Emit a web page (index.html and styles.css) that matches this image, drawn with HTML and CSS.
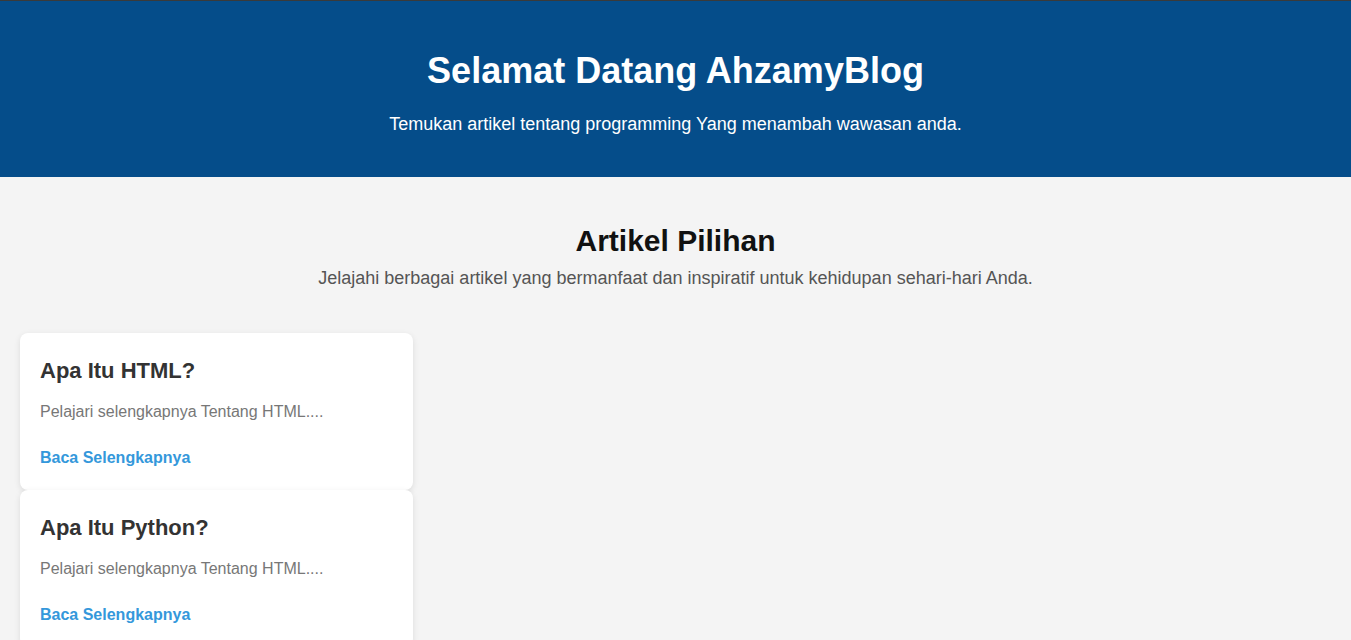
FILE: index.html
```html
<!DOCTYPE html>
<html lang="id">
<head>
    <meta charset="UTF-8">
    <meta name="viewport" content="width=device-width, initial-scale=1.0">
    <title>AhzamyBlog</title>
    <link rel="stylesheet" href="styles.css">
</head>
<body>
    <!-- Header -->
    <header class="hero">
        <h1>Selamat Datang AhzamyBlog</h1>
        <p>Temukan artikel tentang programming Yang menambah wawasan anda.</p>
    </header>

    <!-- Daftar artikel -->
    <section class="featured">
        <h2>Artikel Pilihan</h2>
        <p class="featured-desc">Jelajahi berbagai artikel yang bermanfaat dan inspiratif untuk kehidupan sehari-hari Anda.</p>
    </section>

    <div class="article-list">
        <div class="article-card">
            <h3>Apa Itu HTML?</h3>
            <p>Pelajari selengkapnya Tentang HTML....</p>
            <a href="#" class="read-more">Baca Selengkapnya</a>
        </div>
        <div class="article-card">
            <h3>Apa Itu Python?</h3>
            <p>Pelajari selengkapnya Tentang HTML....</p>
            <a href="#" class="read-more">Baca Selengkapnya</a>
        </div>
    </div>
</body>
</html>
```

FILE: styles.css
```css
body {
    font-family: "Liberation Sans", Arial, sans-serif;
    margin: 0;
    background-color: #f4f4f4;
    color: #333;
}

.hero {
    background-color: #054d8a;
    color: white;
    text-align: center;
    border-top: 1px solid #3a3a3a;
    padding: 49px 20px 42px;
}

.hero h1 {
    font-size: 36px;
    margin: 0 0 22px;
}

.hero p {
    font-size: 18px;
    margin: 0;
}

.featured {
    text-align: center;
    padding: 47px 20px 0;
}

.featured h2 {
    font-size: 30px;
    color: #111;
    margin: 0 0 10px;
}

.featured-desc {
    font-size: 18px;
    color: #555;
    margin: 0;
}

.article-list {
    display: flex;
    flex-direction: column;
    padding: 44px 20px 20px;
}

.article-card {
    width: 30%;
    background-color: white;
    border-radius: 8px;
    box-shadow: 0 2px 6px rgba(0, 0, 0, 0.1);
    padding: 25px 20px 23px;
    box-sizing: border-box;
}

.article-card h3 {
    font-size: 22px;
    color: #333;
    margin: 0 0 19px;
}

.article-card p {
    font-size: 16px;
    color: #777;
    margin: 0 0 28px;
}

.read-more {
    display: block;
    font-size: 16px;
    font-weight: bold;
    color: #3498db;
    text-decoration: none;
}
```
